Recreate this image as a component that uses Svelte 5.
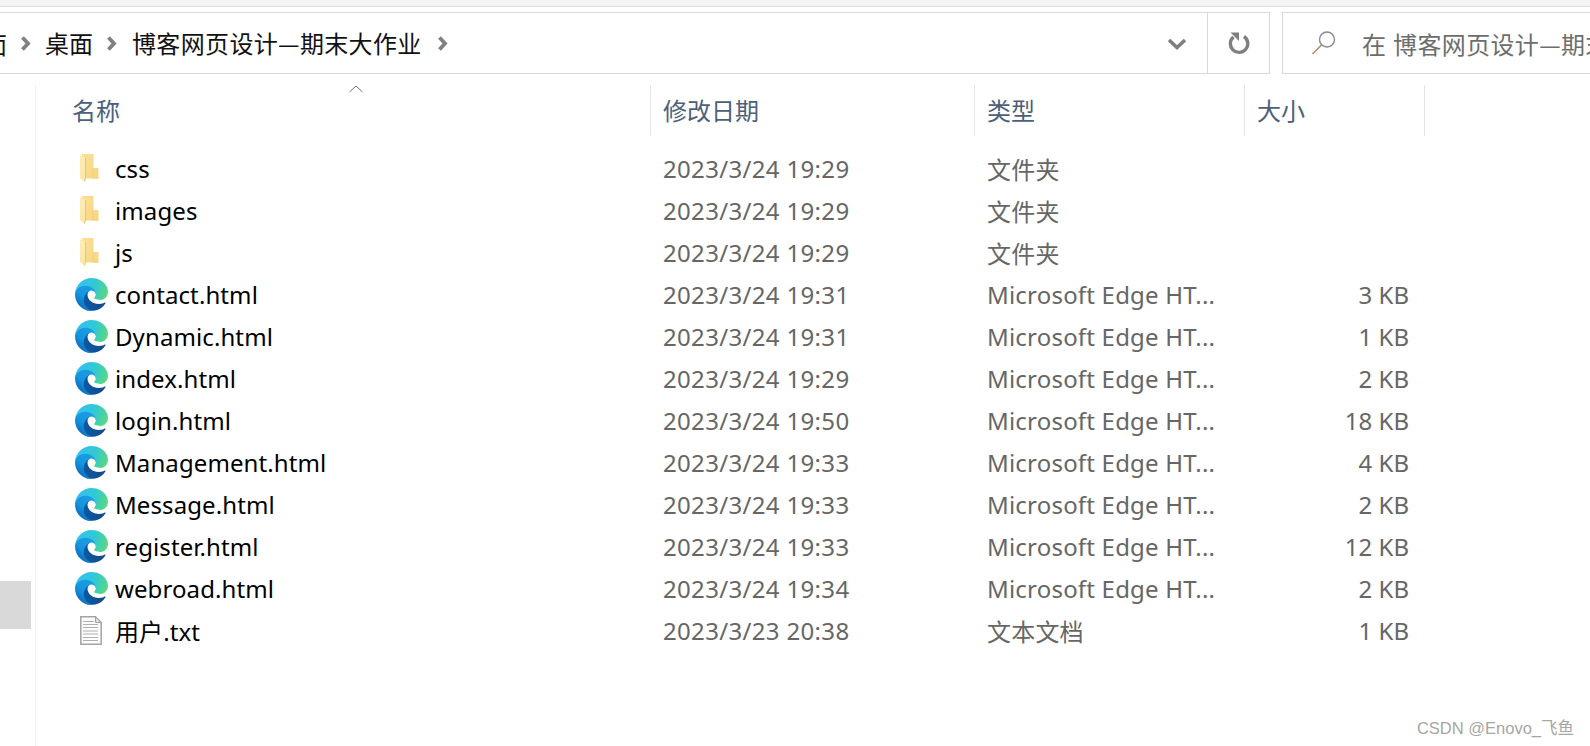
<script>
  const edge = 'Microsoft Edge HT...';
  const files = [
    { name: 'css', date: '2023/3/24 19:29', type: '文件夹', size: '', icon: 'folder' },
    { name: 'images', date: '2023/3/24 19:29', type: '文件夹', size: '', icon: 'folder' },
    { name: 'js', date: '2023/3/24 19:29', type: '文件夹', size: '', icon: 'folder' },
    { name: 'contact.html', date: '2023/3/24 19:31', type: edge, size: '3 KB', icon: 'edge' },
    { name: 'Dynamic.html', date: '2023/3/24 19:31', type: edge, size: '1 KB', icon: 'edge' },
    { name: 'index.html', date: '2023/3/24 19:29', type: edge, size: '2 KB', icon: 'edge' },
    { name: 'login.html', date: '2023/3/24 19:50', type: edge, size: '18 KB', icon: 'edge' },
    { name: 'Management.html', date: '2023/3/24 19:33', type: edge, size: '4 KB', icon: 'edge' },
    { name: 'Message.html', date: '2023/3/24 19:33', type: edge, size: '2 KB', icon: 'edge' },
    { name: 'register.html', date: '2023/3/24 19:33', type: edge, size: '12 KB', icon: 'edge' },
    { name: 'webroad.html', date: '2023/3/24 19:34', type: edge, size: '2 KB', icon: 'edge' },
    { name: '用户.txt', date: '2023/3/23 20:38', type: '文本文档', size: '1 KB', icon: 'txt' }
  ];
</script>

{#snippet chevron()}
  <svg class="chev" width="11" height="15" viewBox="0 0 11 15"><path d="M2.500 1.500 8 7.500 2.500 13.500" fill="none" stroke="#808080" stroke-width="3.800"/></svg>
{/snippet}

<div class="window">
  <div class="strip"></div>
  <div class="toolbar">
    <div class="address">
      <div class="crumbs">
        <span class="clip"><span>面</span></span>
        {@render chevron()}
        <span class="crumb first">桌面</span>
        {@render chevron()}
        <span class="crumb second">博客网页设计—期末大作业</span>
        {@render chevron()}
      </div>
      <div class="drop">
        <svg width="20" height="12" viewBox="0 0 20 12"><path d="M2 2 10 9.500 18 2" fill="none" stroke="#7f7f7f" stroke-width="3.600"/></svg>
      </div>
      <div class="refresh">
        <svg width="22" height="24" viewBox="0 0 22 24">
          <path d="M5.500 6A8.700 8.700 0 1 0 16 5.500" fill="none" stroke="#7f7f7f" stroke-width="3.400"/>
          <path d="M2.500 1.500h8.500v8.500z" fill="#7f7f7f"/>
        </svg>
      </div>
    </div>
    <div class="search">
      <svg width="26" height="26" viewBox="0 0 26 26">
        <circle cx="16" cy="9.500" r="7.500" fill="none" stroke="#8a8a8a" stroke-width="1.400"/>
        <path d="M10.500 15 1.500 24" stroke="#b08a68" stroke-width="1.600"/>
      </svg>
      <span class="search-text">在 博客网页设计—期末大作业</span>
    </div>
  </div>

  <div class="body">
    <div class="side"><div class="thumb"></div></div>
    <div class="main">
      <div class="header">
        <div class="h name-h">名称
          <svg class="sort" width="14" height="8" viewBox="0 0 14 8"><path d="M.5 7 7 1l6.500 6" fill="none" stroke="#6f6f6f" stroke-width="1"/></svg>
        </div>
        <div class="h">修改日期</div>
        <div class="h">类型</div>
        <div class="h">大小</div>
      </div>
      <div class="rows">
        {#each files as f}
          <div class="row">
            <div class="ic {f.icon}">
              {#if f.icon === 'folder'}
                <svg width="20" height="28" viewBox="0 0 20 28">
                  <defs>
                    <linearGradient id="fb" x1="0" y1="0" x2="1" y2="1"><stop offset="0" stop-color="#fbe096"/><stop offset="1" stop-color="#f6d681"/></linearGradient>
                    <linearGradient id="ff" x1="0" y1="0" x2="0" y2="1"><stop offset="0" stop-color="#fdecb4"/><stop offset="1" stop-color="#fbe7a6"/></linearGradient>
                  </defs>
                  <path d="M2 0H13.500V14H18.500V24.500H2z" fill="url(#fb)"/>
                  <path d="M13.500 14V23.500H18.500V24.500H12.500V14z" fill="#f3d078"/>
                  <path d="M0 1 5.500 4V24L4.500 27.500 0 24z" fill="url(#ff)"/>
                  <path d="M5.500 4V24L4.500 27.500" fill="none" stroke="#e9c66c" stroke-width="1"/>
                </svg>
              {:else if f.icon === 'edge'}
                <svg width="33" height="33" viewBox="0 0 256 256">
                  <defs>
                    <linearGradient id="e1" x1="60" y1="180" x2="240" y2="180" gradientUnits="userSpaceOnUse"><stop offset="0" stop-color="#0c59a4"/><stop offset="1" stop-color="#114a8b"/></linearGradient>
                    <linearGradient id="e2" x1="150" y1="100" x2="40" y2="220" gradientUnits="userSpaceOnUse"><stop offset="0" stop-color="#1b9de2"/><stop offset=".6" stop-color="#1595df"/><stop offset="1" stop-color="#0b6fc0"/></linearGradient>
                    <radialGradient id="e3" cx="30" cy="40" r="260" gradientUnits="userSpaceOnUse"><stop offset="0" stop-color="#35c1f1"/><stop offset=".5" stop-color="#30c9d5"/><stop offset=".85" stop-color="#55d68a"/><stop offset="1" stop-color="#66eb6e"/></radialGradient>
                  </defs>
                  <path d="M231.500 190.500c-3.400 1.800-6.900 3.400-10.500 4.700a101.500 101.500 0 0 1-35.800 6.400c-47.200 0-88.300-32.400-88.300-74.100a31.400 31.400 0 0 1 16.400-27.300c-42.700 1.800-53.700 46.300-53.700 72.300 0 73.700 67.900 81.100 82.500 81.100 7.900 0 19.800-2.300 26.900-4.600l1.300-.4a128.300 128.300 0 0 0 66.400-52.600 4 4 0 0 0-5.200-5.500Z" fill="url(#e1)"/>
                  <path d="M105.700 241.400a79.200 79.200 0 0 1-22.700-21.300 80.700 80.700 0 0 1 29.500-120c3.200-1.500 8.500-4.100 15.600-4a32.400 32.400 0 0 1 25.800 13 32 32 0 0 1 6.300 18.700c0-.2 24.500-79.600-80-79.600-43.900 0-80 41.700-80 78.200a130.200 130.200 0 0 0 12.100 56 128 128 0 0 0 156.400 67.100 75.500 75.500 0 0 1-63-8.100Z" fill="url(#e2)"/>
                  <path d="M152.300 148.800c-.8 1-3.300 2.500-3.300 5.700 0 2.600 1.700 5.100 4.700 7.200 14.400 10 41.500 8.700 41.600 8.700a59.600 59.600 0 0 0 30.300-8.400 61.400 61.400 0 0 0 30.400-52.800c.3-22.400-8-37.300-11.300-43.900C223.500 23.800 178.100 0 128.600 0A128 128 0 0 0 .6 126.200c.5-36.500 36.800-66 80-66 3.500 0 23.500.3 42 10a72.600 72.600 0 0 1 30.900 29.300c6.100 10.600 7.200 24.100 7.200 29.500s-2.700 13.300-8.400 20.800Z" fill="url(#e3)"/>
                </svg>
              {:else}
                <svg width="22" height="29" viewBox="0 0 22 29">
                  <path d="M.8.800h14.700l5.700 5.700v21.700H.800z" fill="#fdfdfd" stroke="#a4a4a4" stroke-width="1.500"/>
                  <path d="M15.500.800v5.700h5.700z" fill="#dedede" stroke="#a4a4a4"/>
                  <path d="M3 5.500h11M3 8.500h15M3 11.500h15M3 15h15M3 18h15M3 21.500h15M3 24.500h15" stroke="#b0b0b0" stroke-width="1.200"/>
                </svg>
              {/if}
            </div>
            <div class="name">{f.name}</div>
            <div class="date">{f.date}</div>
            <div class="type">{f.type}</div>
            <div class="size">{f.size}</div>
          </div>
        {/each}
      </div>
    </div>
  </div>
  <div class="mark">CSDN @Enovo_飞鱼</div>
</div>

<style>
  :global(body) { margin: 0; background: #fff; }
  .window {
    position: relative;
    width: 1590px;
    height: 746px;
    overflow: hidden;
    background: #fff;
    display: flex;
    flex-direction: column;
    font-family: "Noto Sans", "Noto Sans CJK SC", sans-serif;
    font-size: 24px;
    color: #000;
  }
  .strip { height: 6px; background: #f4f5f7; border-bottom: 1px solid #dcdcdc; flex: none; }
  .toolbar { display: flex; gap: 12px; margin-top: 5px; height: 62px; flex: none; }
  .address {
    width: 1270px;
    box-sizing: border-box;
    border: 1px solid #d9d9d9;
    border-left: 0;
    display: flex;
    align-items: center;
    flex: none;
  }
  .crumbs {
    flex: 1;
    display: flex;
    align-items: center;
    font-family: "Noto Sans CJK SC", sans-serif;
    color: #111;
    height: 100%;
  }
  .clip { width: 7px; overflow: hidden; display: flex; justify-content: flex-end; margin-right: 13px; }
  .clip span { flex: none; }
  .crumb { line-height: 1; }
  .first { margin: 0 13px 0 14px; }
  .second { margin: 0 15px 0 15px; letter-spacing: 0.35px; }
  .chev { flex: none; }
  .drop { display: flex; align-items: center; justify-content: flex-end; padding-right: 20px; padding-top: 2px; box-sizing: border-box; height: 100%; }
  .refresh {
    width: 62px;
    height: 100%;
    border-left: 1px solid #d9d9d9;
    display: flex;
    align-items: center;
    justify-content: center;
    box-sizing: border-box;
  }
  .search {
    flex: 1;
    box-sizing: border-box;
    border: 1px solid #d9d9d9;
    border-right: 0;
    display: flex;
    align-items: center;
    padding-left: 28px;
    gap: 25px;
    color: #6d6d6d;
    white-space: nowrap;
    overflow: hidden;
    font-family: "Noto Sans CJK SC", sans-serif;
  }
  .search svg { flex: none; }
  .search-text { word-spacing: 1px; letter-spacing: 0.35px; }
  .body { flex: 1; display: flex; padding-top: 11px; min-height: 0; }
  .side { width: 35px; flex: none; border-right: 1px solid #f1f1f1; position: relative; }
  .thumb { width: 31px; height: 48px; margin-top: 496px; background: #d9d9d9; }
  .main { flex: 1; }
  .header {
    display: grid;
    grid-template-columns: 615px 324px 270px 180px;
    height: 51px;
  }
  .h {
    position: relative;
    border-right: 1px solid #e5e5e5;
    display: flex;
    align-items: center;
    padding: 0 0 3px 12px;
    color: #4c607a;
    font-family: "Noto Sans CJK SC", sans-serif;
  }
  .name-h { padding-left: 36px; }
  .sort { position: absolute; left: 313px; top: 0; }
  .rows { padding-top: 11px; }
  .row {
    display: grid;
    grid-template-columns: 79px 548px 324px 300px 122px;
    height: 42px;
    align-items: center;
    white-space: nowrap;
    font-family: "Noto Sans", "Noto Sans CJK SC", sans-serif;
  }
  .ic { display: flex; align-items: center; height: 33px; }
  .ic.edge { padding-left: 39px; }
  .ic.folder { padding-left: 44px; }
  .ic.txt { padding-left: 44px; }
  .ic svg { flex: none; }
  .name { color: #000; letter-spacing: 0.1px; }
  .date { color: #666; letter-spacing: 0.33px; }
  .type { color: #666; letter-spacing: 0.2px; }
  .size { color: #666; text-align: right; }
  .mark {
    position: absolute;
    right: 16px;
    bottom: 7px;
    font-size: 16.500px;
    color: #a6a6a6;
    font-family: "Liberation Sans", "Noto Sans CJK SC", sans-serif;
  }
</style>
